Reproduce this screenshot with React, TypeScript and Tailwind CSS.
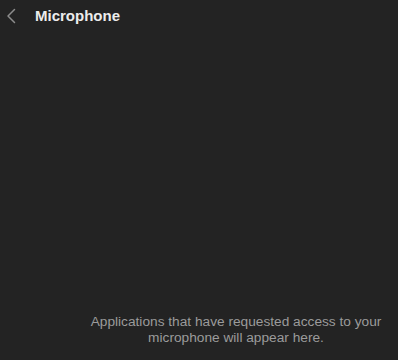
export default function App() {
    return (
        <div className="w-[398px] h-[360px] bg-[#232323] flex flex-col font-['Liberation_Sans',Arial,sans-serif] overflow-hidden">
            {/* Header */}
            <div className="flex items-center h-[32px] pl-[6px]">
                <svg width="10" height="16" viewBox="0 0 10 16" fill="none" className="text-[#8c8c8c]">
                    <path d="M8.5 1.5 2 8l6.5 6.5" stroke="currentColor" strokeWidth="1.5" strokeLinecap="round" strokeLinejoin="round" />
                </svg>
                <h1 className="ml-[19px] text-[15px] font-bold text-[#ececec]">Microphone</h1>
            </div>

            {/* Empty state */}
            <div className="flex-1 flex items-end justify-center pl-[74px] pb-[14px]">
                <p className="text-[13.7px] leading-[16px] text-[#9b9b9b] text-center">
                    Applications that have requested access to your<br />
                    microphone will appear here.
                </p>
            </div>
        </div>
    )
}
